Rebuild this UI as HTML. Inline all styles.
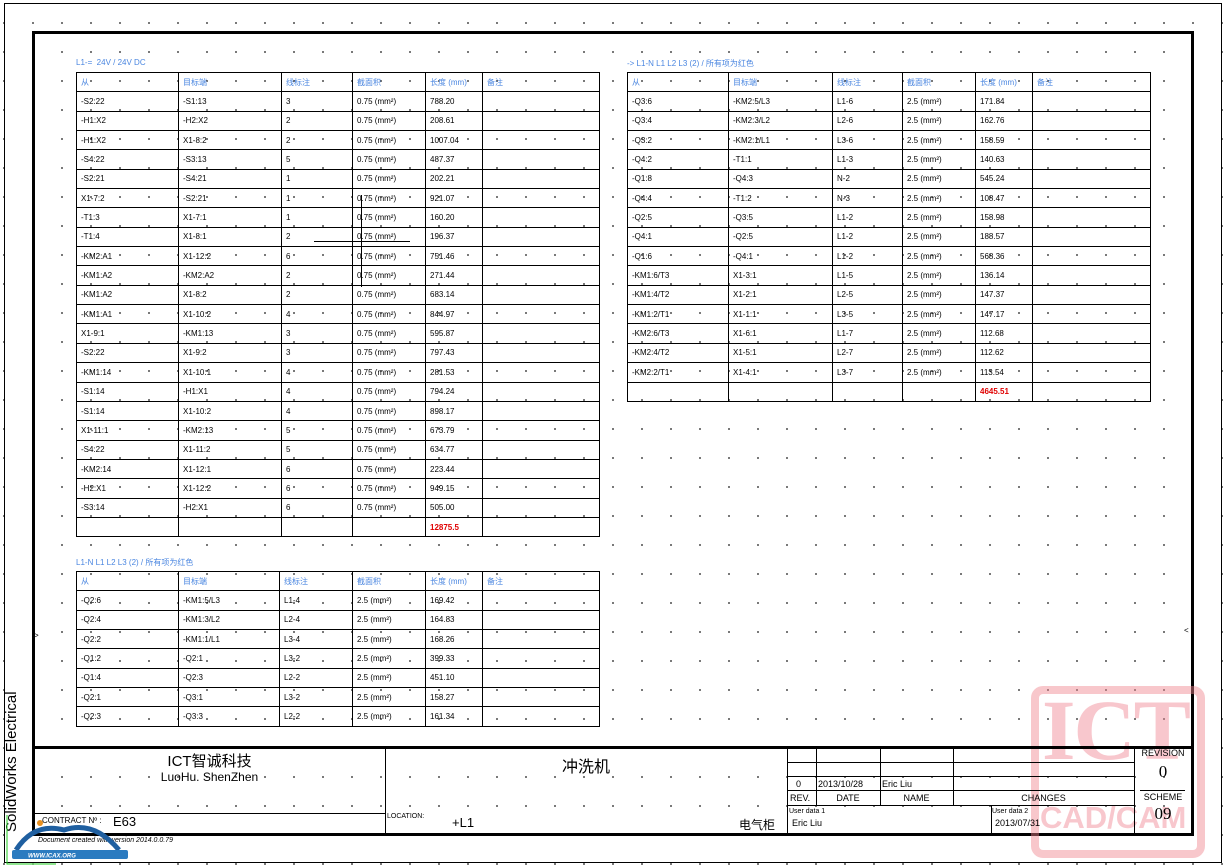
<!DOCTYPE html>
<html><head><meta charset="utf-8"><style>
*{margin:0;padding:0;box-sizing:border-box}
body{width:1227px;height:866px;position:relative;background:#fff;overflow:hidden;font-family:"Liberation Sans","Noto Sans CJK SC",sans-serif;color:#000}
.dots{position:absolute;left:0;top:0;width:1227px;height:866px;background-image:radial-gradient(circle,#000 0.7px,transparent 0.9px);background-size:29px 29px;background-position:-10.5px 8.5px}
.a{position:absolute}
table{position:absolute;border-collapse:collapse;table-layout:fixed;font-size:8px}
td{border:1px solid #000;padding:0 0 0 4px;height:19.35px;white-space:nowrap;overflow:hidden;background:transparent}
tr.h td{color:#4a86e0}
.r{color:#e00000;font-weight:bold}
.t{font-size:8px;color:#4a86e0;position:absolute}
</style></head><body>
<div class="dots"></div>
<div class="a" style="left:4px;top:3px;width:1218px;height:860px;border:1px solid #000"></div>
<div class="a" style="left:32px;top:31px;width:1162px;height:805px;border:3px solid #000"></div>

<div class="t" style="left:76px;top:58px">L1-=&nbsp; 24V / 24V DC</div>
<table style="left:76px;top:72px;width:523px">
<colgroup><col style="width:102px"><col style="width:103px"><col style="width:71px"><col style="width:73px"><col style="width:57px"><col style="width:117px"></colgroup>
<tr class="h"><td>从</td><td>目标端</td><td>线标注</td><td>截面积</td><td>长度 (mm)</td><td>备注</td></tr>
<tr><td>-S2:22</td><td>-S1:13</td><td>3</td><td>0.75 (mm²)</td><td>788.20</td><td></td></tr>
<tr><td>-H1:X2</td><td>-H2:X2</td><td>2</td><td>0.75 (mm²)</td><td>208.61</td><td></td></tr>
<tr><td>-H1:X2</td><td>X1-8:2</td><td>2</td><td>0.75 (mm²)</td><td>1007.04</td><td></td></tr>
<tr><td>-S4:22</td><td>-S3:13</td><td>5</td><td>0.75 (mm²)</td><td>487.37</td><td></td></tr>
<tr><td>-S2:21</td><td>-S4:21</td><td>1</td><td>0.75 (mm²)</td><td>202.21</td><td></td></tr>
<tr><td>X1-7:2</td><td>-S2:21</td><td>1</td><td>0.75 (mm²)</td><td>921.07</td><td></td></tr>
<tr><td>-T1:3</td><td>X1-7:1</td><td>1</td><td>0.75 (mm²)</td><td>160.20</td><td></td></tr>
<tr><td>-T1:4</td><td>X1-8:1</td><td>2</td><td>0.75 (mm²)</td><td>196.37</td><td></td></tr>
<tr><td>-KM2:A1</td><td>X1-12:2</td><td>6</td><td>0.75 (mm²)</td><td>751.46</td><td></td></tr>
<tr><td>-KM1:A2</td><td>-KM2:A2</td><td>2</td><td>0.75 (mm²)</td><td>271.44</td><td></td></tr>
<tr><td>-KM1:A2</td><td>X1-8:2</td><td>2</td><td>0.75 (mm²)</td><td>683.14</td><td></td></tr>
<tr><td>-KM1:A1</td><td>X1-10:2</td><td>4</td><td>0.75 (mm²)</td><td>844.97</td><td></td></tr>
<tr><td>X1-9:1</td><td>-KM1:13</td><td>3</td><td>0.75 (mm²)</td><td>595.87</td><td></td></tr>
<tr><td>-S2:22</td><td>X1-9:2</td><td>3</td><td>0.75 (mm²)</td><td>797.43</td><td></td></tr>
<tr><td>-KM1:14</td><td>X1-10:1</td><td>4</td><td>0.75 (mm²)</td><td>281.53</td><td></td></tr>
<tr><td>-S1:14</td><td>-H1:X1</td><td>4</td><td>0.75 (mm²)</td><td>794.24</td><td></td></tr>
<tr><td>-S1:14</td><td>X1-10:2</td><td>4</td><td>0.75 (mm²)</td><td>898.17</td><td></td></tr>
<tr><td>X1-11:1</td><td>-KM2:13</td><td>5</td><td>0.75 (mm²)</td><td>673.79</td><td></td></tr>
<tr><td>-S4:22</td><td>X1-11:2</td><td>5</td><td>0.75 (mm²)</td><td>634.77</td><td></td></tr>
<tr><td>-KM2:14</td><td>X1-12:1</td><td>6</td><td>0.75 (mm²)</td><td>223.44</td><td></td></tr>
<tr><td>-H2:X1</td><td>X1-12:2</td><td>6</td><td>0.75 (mm²)</td><td>949.15</td><td></td></tr>
<tr><td>-S3:14</td><td>-H2:X1</td><td>6</td><td>0.75 (mm²)</td><td>505.00</td><td></td></tr>
<tr><td></td><td></td><td></td><td></td><td class="r">12875.5</td><td></td></tr>
</table>
<div class="a" style="left:314px;top:241px;width:96px;border-top:1px solid #000"></div>
<div class="a" style="left:361px;top:195px;height:92px;border-left:1px solid #000"></div>

<div class="t" style="left:627px;top:58px">-&gt; L1-N L1 L2 L3 (2) / 所有项为红色</div>
<table style="left:627px;top:72px;width:523px">
<colgroup><col style="width:101px"><col style="width:104px"><col style="width:70px"><col style="width:73px"><col style="width:57px"><col style="width:118px"></colgroup>
<tr class="h"><td>从</td><td>目标端</td><td>线标注</td><td>截面积</td><td>长度 (mm)</td><td>备注</td></tr>
<tr><td>-Q3:6</td><td>-KM2:5/L3</td><td>L1-6</td><td>2.5 (mm²)</td><td>171.84</td><td></td></tr>
<tr><td>-Q3:4</td><td>-KM2:3/L2</td><td>L2-6</td><td>2.5 (mm²)</td><td>162.76</td><td></td></tr>
<tr><td>-Q3:2</td><td>-KM2:1/L1</td><td>L3-6</td><td>2.5 (mm²)</td><td>158.59</td><td></td></tr>
<tr><td>-Q4:2</td><td>-T1:1</td><td>L1-3</td><td>2.5 (mm²)</td><td>140.63</td><td></td></tr>
<tr><td>-Q1:8</td><td>-Q4:3</td><td>N-2</td><td>2.5 (mm²)</td><td>545.24</td><td></td></tr>
<tr><td>-Q4:4</td><td>-T1:2</td><td>N-3</td><td>2.5 (mm²)</td><td>108.47</td><td></td></tr>
<tr><td>-Q2:5</td><td>-Q3:5</td><td>L1-2</td><td>2.5 (mm²)</td><td>158.98</td><td></td></tr>
<tr><td>-Q4:1</td><td>-Q2:5</td><td>L1-2</td><td>2.5 (mm²)</td><td>188.57</td><td></td></tr>
<tr><td>-Q1:6</td><td>-Q4:1</td><td>L1-2</td><td>2.5 (mm²)</td><td>568.36</td><td></td></tr>
<tr><td>-KM1:6/T3</td><td>X1-3:1</td><td>L1-5</td><td>2.5 (mm²)</td><td>136.14</td><td></td></tr>
<tr><td>-KM1:4/T2</td><td>X1-2:1</td><td>L2-5</td><td>2.5 (mm²)</td><td>147.37</td><td></td></tr>
<tr><td>-KM1:2/T1</td><td>X1-1:1</td><td>L3-5</td><td>2.5 (mm²)</td><td>147.17</td><td></td></tr>
<tr><td>-KM2:6/T3</td><td>X1-6:1</td><td>L1-7</td><td>2.5 (mm²)</td><td>112.68</td><td></td></tr>
<tr><td>-KM2:4/T2</td><td>X1-5:1</td><td>L2-7</td><td>2.5 (mm²)</td><td>112.62</td><td></td></tr>
<tr><td>-KM2:2/T1</td><td>X1-4:1</td><td>L3-7</td><td>2.5 (mm²)</td><td>113.54</td><td></td></tr>
<tr><td></td><td></td><td></td><td></td><td class="r">4645.51</td><td></td></tr>
</table>

<div class="t" style="left:76px;top:557px">L1-N L1 L2 L3 (2) / 所有项为红色</div>
<table style="left:76px;top:571px;width:523px">
<colgroup><col style="width:102px"><col style="width:101px"><col style="width:73px"><col style="width:73px"><col style="width:57px"><col style="width:117px"></colgroup>
<tr class="h"><td>从</td><td>目标端</td><td>线标注</td><td>截面积</td><td>长度 (mm)</td><td>备注</td></tr>
<tr><td>-Q2:6</td><td>-KM1:5/L3</td><td>L1-4</td><td>2.5 (mm²)</td><td>169.42</td><td></td></tr>
<tr><td>-Q2:4</td><td>-KM1:3/L2</td><td>L2-4</td><td>2.5 (mm²)</td><td>164.83</td><td></td></tr>
<tr><td>-Q2:2</td><td>-KM1:1/L1</td><td>L3-4</td><td>2.5 (mm²)</td><td>168.26</td><td></td></tr>
<tr><td>-Q1:2</td><td>-Q2:1</td><td>L3-2</td><td>2.5 (mm²)</td><td>399.33</td><td></td></tr>
<tr><td>-Q1:4</td><td>-Q2:3</td><td>L2-2</td><td>2.5 (mm²)</td><td>451.10</td><td></td></tr>
<tr><td>-Q2:1</td><td>-Q3:1</td><td>L3-2</td><td>2.5 (mm²)</td><td>158.27</td><td></td></tr>
<tr><td>-Q2:3</td><td>-Q3:3</td><td>L2-2</td><td>2.5 (mm²)</td><td>161.34</td><td></td></tr>
</table>

<div class="a" style="left:34px;top:632px;font-size:8px;line-height:1">&gt;</div>
<div class="a" style="left:1184px;top:627px;font-size:8px;line-height:1">&lt;</div>

<!-- pink watermark -->
<div class="a" style="left:1031px;top:686px;width:174px;height:172px;border:8px solid rgba(240,130,140,0.45);border-radius:12px"></div>
<div class="a" style="left:1042px;top:680px;font-family:'Liberation Serif',serif;font-weight:bold;font-size:86px;color:rgba(240,130,145,0.45);letter-spacing:-2px">ICT</div>
<div class="a" style="left:1040px;top:800px;font-weight:bold;font-size:31px;color:rgba(240,130,145,0.45)">CAD/CAM</div>

<!-- title block -->
<div class="a" style="left:34px;top:746px;width:1158px;border-top:3px solid #000"></div>
<div class="a" style="left:385px;top:747px;height:87px;border-left:1px solid #000"></div>
<div class="a" style="left:34px;top:813px;width:351px;border-top:1px solid #000"></div>
<div class="a" style="left:385px;top:813px;width:402px;border-top:1px solid #000;display:none"></div>
<div class="a" style="left:787px;top:747px;height:87px;border-left:1px solid #000"></div>
<div class="a" style="left:816px;top:747px;height:58px;border-left:1px solid #000"></div>
<div class="a" style="left:880px;top:747px;height:58px;border-left:1px solid #000"></div>
<div class="a" style="left:953px;top:747px;height:58px;border-left:1px solid #000"></div>
<div class="a" style="left:1134px;top:747px;height:87px;border-left:1px solid #000"></div>
<div class="a" style="left:991px;top:805px;height:29px;border-left:1px solid #000"></div>
<div class="a" style="left:787px;top:762px;width:347px;border-top:1px solid #000"></div>
<div class="a" style="left:787px;top:776px;width:347px;border-top:1px solid #000"></div>
<div class="a" style="left:787px;top:790px;width:347px;border-top:1px solid #000"></div>
<div class="a" style="left:787px;top:805px;width:347px;border-top:1px solid #000"></div>
<div class="a" style="left:1140px;top:790px;width:45px;border-top:1px solid #000"></div>

<div class="a" style="left:34px;top:750px;width:351px;text-align:center;font-size:15px">ICT智诚科技</div>
<div class="a" style="left:34px;top:770px;width:351px;text-align:center;font-size:12px">LuoHu. ShenZhen</div>
<div class="a" style="left:385px;top:753px;width:402px;text-align:center;font-size:16px">冲洗机</div>
<div class="a" style="left:42px;top:816px;font-size:8px">CONTRACT Nº :</div>
<div class="a" style="left:113px;top:814px;font-size:13px">E63</div>
<div class="a" style="left:387px;top:813px;font-size:7px">LOCATION:</div>
<div class="a" style="left:452px;top:815px;font-size:13px">+L1</div>
<div class="a" style="left:739px;top:816px;font-size:12px">电气柜</div>
<div class="a" style="left:38px;top:837px;font-size:7px;font-style:italic">Document created with version 2014.0.0.79</div>

<div class="a" style="left:796px;top:779px;font-size:9px">0</div>
<div class="a" style="left:818px;top:779px;font-size:9px">2013/10/28</div>
<div class="a" style="left:882px;top:779px;font-size:9px">Eric Liu</div>
<div class="a" style="left:790px;top:793px;font-size:9px">REV.</div>
<div class="a" style="left:816px;top:793px;width:64px;text-align:center;font-size:9px">DATE</div>
<div class="a" style="left:880px;top:793px;width:73px;text-align:center;font-size:9px">NAME</div>
<div class="a" style="left:953px;top:793px;width:181px;text-align:center;font-size:9px">CHANGES</div>
<div class="a" style="left:789px;top:808px;font-size:7px">User data 1</div>
<div class="a" style="left:792px;top:818px;font-size:9px">Eric Liu</div>
<div class="a" style="left:992px;top:808px;font-size:7px">User data 2</div>
<div class="a" style="left:995px;top:818px;font-size:9px">2013/07/31</div>
<div class="a" style="left:1134px;top:748px;width:58px;text-align:center;font-size:9px">REVISION</div>
<div class="a" style="left:1134px;top:762px;width:58px;text-align:center;font-family:'Liberation Serif',serif;font-size:17px">0</div>
<div class="a" style="left:1134px;top:792px;width:58px;text-align:center;font-size:9px">SCHEME</div>
<div class="a" style="left:1134px;top:804px;width:58px;text-align:center;font-family:'Liberation Serif',serif;font-size:17px">09</div>

<div class="a" style="left:3px;top:832px;transform:rotate(-90deg);transform-origin:0 0;font-size:15px;white-space:nowrap">SolidWorks Electrical</div>

<!-- icax logo approximation -->
<svg class="a" style="left:4px;top:812px" width="125" height="54" viewBox="0 0 125 54">
<path d="M3 3 V52 H52" fill="none" stroke="#2c2" stroke-width="1"/>
<path d="M12 38 Q30 10 60 18 Q90 8 115 38" fill="none" stroke="#1f5fa0" stroke-width="5"/>
<rect x="8" y="38" width="116" height="9" rx="2" fill="#2b7bc0"/>
<text x="24" y="45.5" font-size="6" font-weight="bold" fill="#fff" font-family="Liberation Sans,sans-serif" font-style="italic">WWW.ICAX.ORG</text>
<circle cx="36" cy="11" r="3" fill="#e89020"/>
</svg>
</body></html>
